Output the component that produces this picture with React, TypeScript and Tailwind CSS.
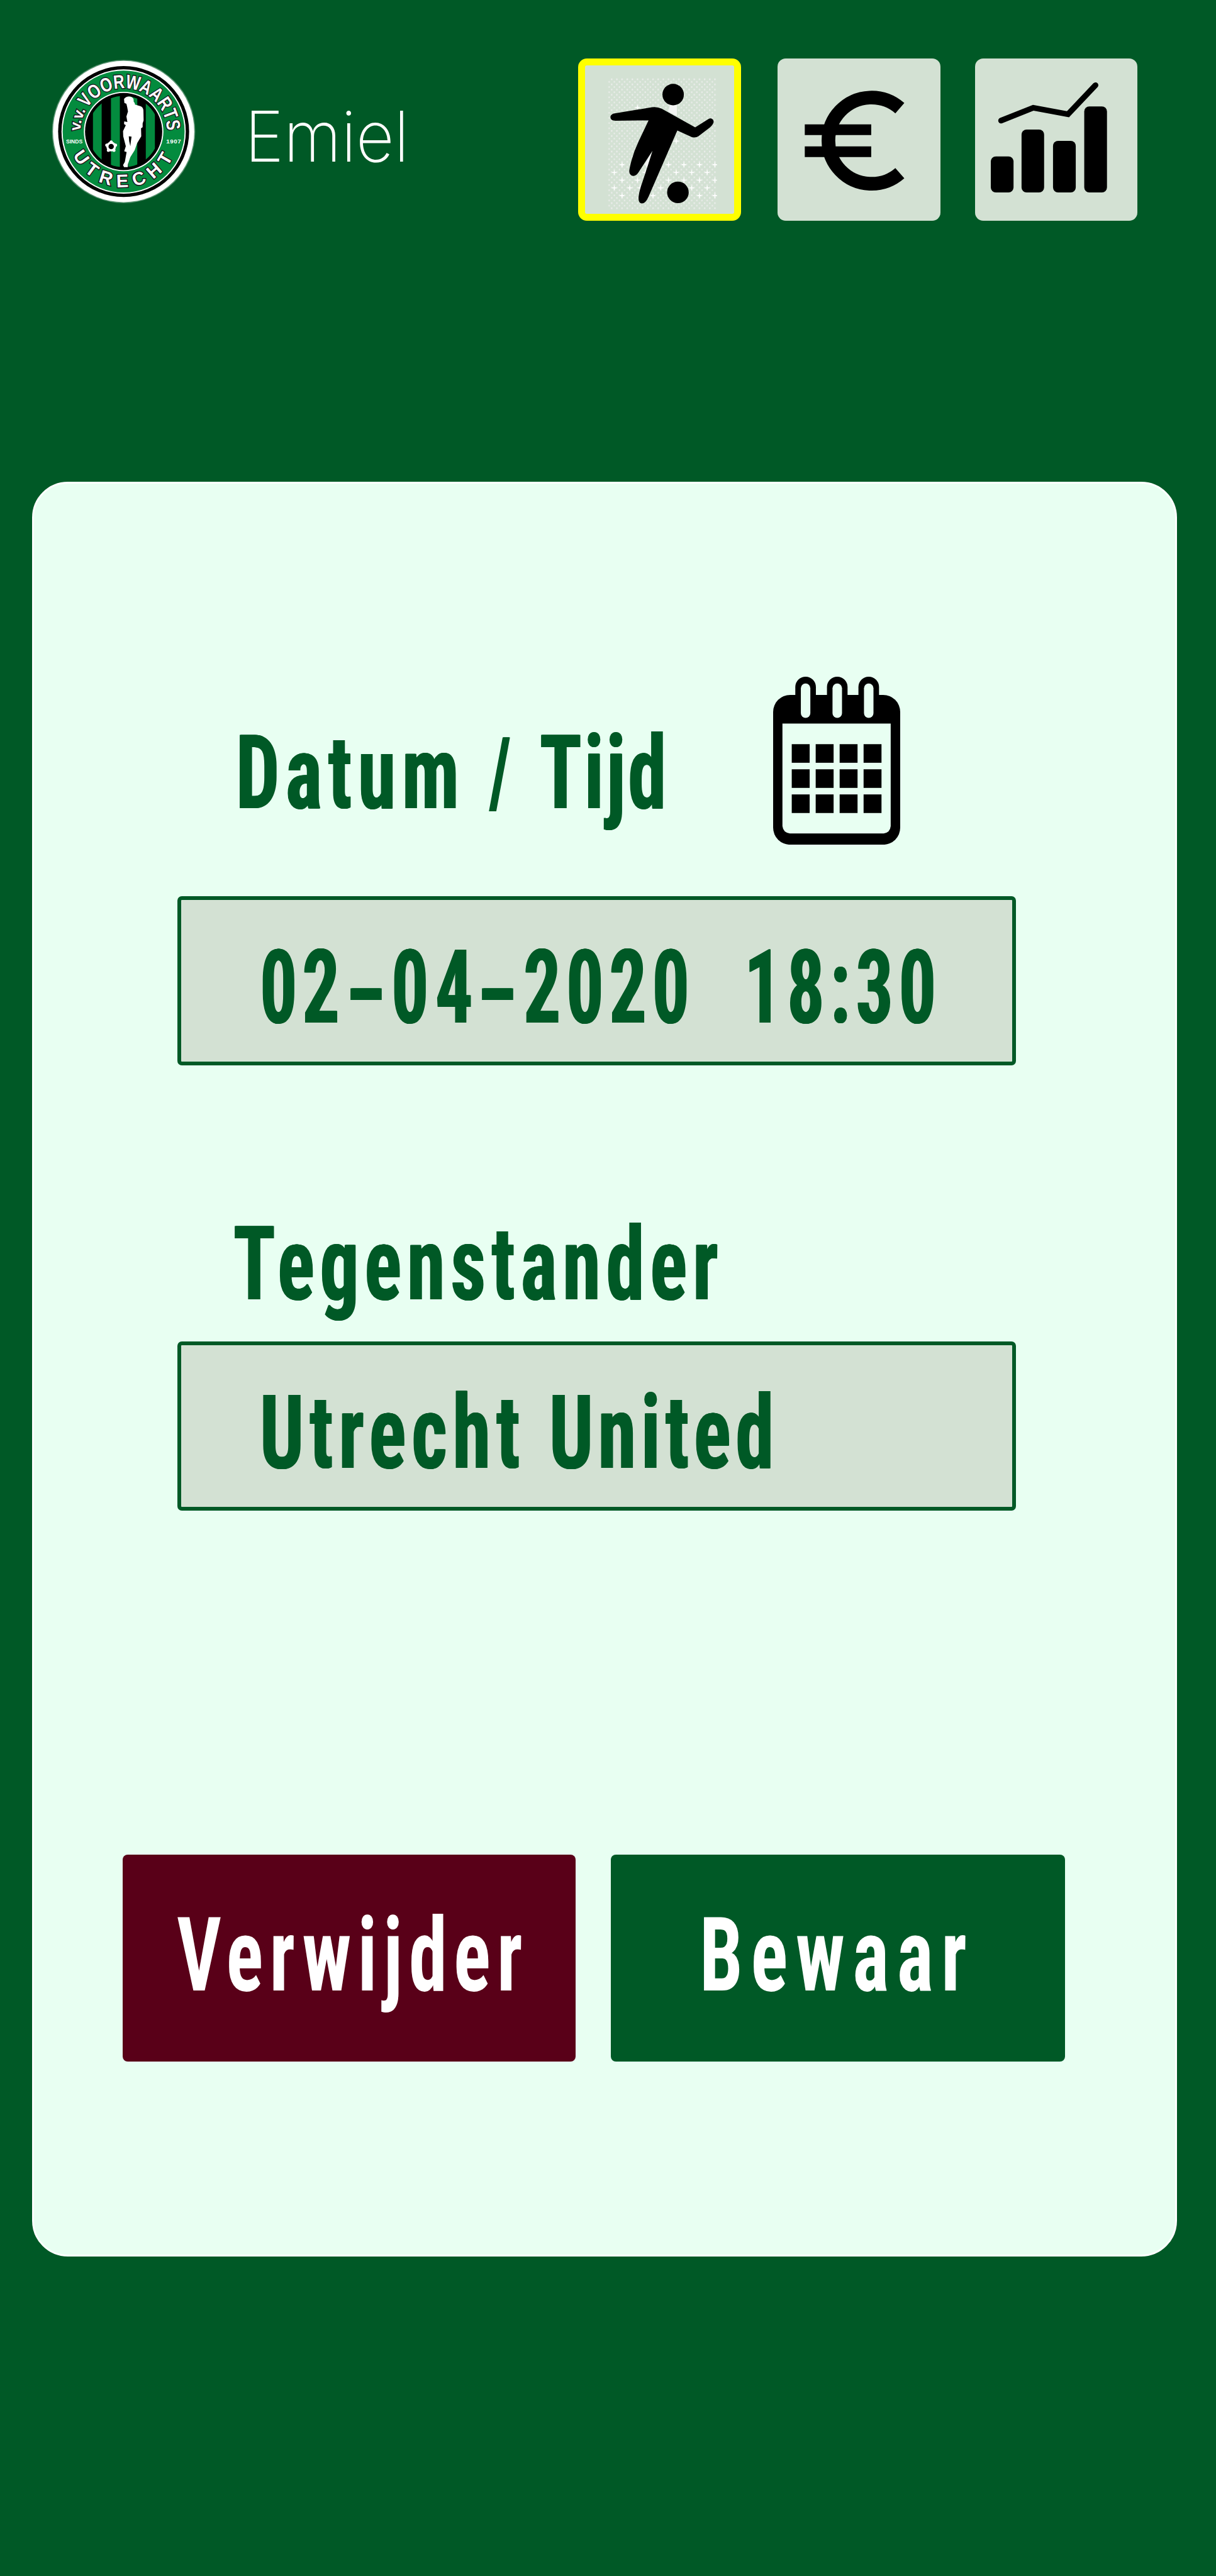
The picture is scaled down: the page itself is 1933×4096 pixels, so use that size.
import React from 'react';

function Word({ children, className }: { children: string; className: string }) {
  return (
    <span className={`block h-[192px] leading-[192px] whitespace-nowrap origin-left ${className}`}>{children}</span>
  );
}

function ClubLogo() {
  return (
    <svg viewBox="80 60 730 740" className="h-[232.8px] w-[229.7px] shrink-0">
      <defs>
        <clipPath id="field"><circle cx="444" cy="426" r="180" /></clipPath>
        <path id="arcTop" d="M 225 426 A 219 219 0 0 1 663 426" />
        <path id="arcBottom" d="M 180 522 A 281 281 0 0 0 708 522" />
      </defs>
      <circle cx="444" cy="426" r="362" fill="#fff" opacity=".35" />
      <circle cx="444" cy="426" r="357" fill="#fff" />
      <circle cx="444" cy="426" r="331" fill="#000" />
      <circle cx="444" cy="426" r="314" fill="#fff" />
      <circle cx="444" cy="426" r="308" fill="#038b3e" />
      <circle cx="444" cy="426" r="201" fill="#fff" />
      <circle cx="444" cy="426" r="195" fill="#000" />
      <g clipPath="url(#field)" fill="#038b3e">
        <rect x="289" y="230" width="44" height="400" />
        <rect x="380" y="230" width="45" height="400" />
        <rect x="468" y="230" width="45" height="400" />
        <rect x="556" y="230" width="46" height="400" />
      </g>
      <path fill="#fff" d="M446 262 Q452 250 470 249 Q488 249 494 262 L495 276 Q502 280 501 290 L528 298 Q543 303 544 320 L545 370 L540 385 L540 404 L532 410 L533 450 L512 485 L500 520 L478 555 L466 590 L465 606 L446 606 L441 596 L450 580 L459 530 L447 526 L455 500 L442 450 L441 424 L455 394 L446 388 L447 375 L463 378 L458 350 L466 325 L462 302 L458 286 L448 282 Z" />
      <path fill="#000" d="M470 450 L484 452 L480 480 L478 500 L472 475 Z" />
      <circle cx="381" cy="502" r="19" fill="#000" stroke="#fff" strokeWidth="11" />
      <g fill="#fff">
        <circle cx="381" cy="479" r="8" /><circle cx="403" cy="495" r="8" /><circle cx="395" cy="521" r="8" /><circle cx="367" cy="521" r="8" /><circle cx="359" cy="495" r="8" />
      </g>
      <g fill="#fff" stroke="#1c0f1a" strokeWidth="9" paintOrder="stroke" fontFamily="Liberation Sans" fontWeight="700">
        <text fontSize="78"><textPath href="#arcTop" startOffset="2" textLength="112">v.v.</textPath></text>
        <text fontSize="98"><textPath href="#arcTop" startOffset="124" textLength="560" lengthAdjust="spacingAndGlyphs">VOORWAARTS</textPath></text>
        <text fontSize="92" letterSpacing="31"><textPath href="#arcBottom" startOffset="25">UTRECHT</textPath></text>
      </g>
      <g fill="#fff" fontFamily="Liberation Sans" fontWeight="700" fontSize="31">
        <text x="153" y="486" textLength="83" lengthAdjust="spacingAndGlyphs">SINDS</text>
        <text x="659" y="486" textLength="75">1907</text>
      </g>
    </svg>
  );
}

const sparkles = [[342, 303], [537, 472], [264, 591], [498, 591], [576, 591], [654, 591], [732, 591], [225, 630], [381, 630], [537, 630], [615, 630], [693, 630], [264, 669], [342, 669], [498, 669], [576, 669], [654, 669], [732, 669], [225, 708], [303, 708], [355, 708], [459, 708], [615, 708], [693, 708], [264, 747], [420, 747], [654, 747], [732, 747]];

function SoccerIcon() {
  return (
    <svg viewBox="78 90 750 750" className="block h-full w-full">
      <defs>
        <pattern id="dots" x="206" y="154" width="26" height="26" patternUnits="userSpaceOnUse">
          <rect x="3" y="2" width="7" height="8" fill="#ecedec" />
          <rect x="16" y="15" width="7" height="8" fill="#e9ece9" />
        </pattern>
      </defs>
      <rect x="192" y="154" width="546" height="662" fill="url(#dots)" />
      <path fill="#f4f5f4" d="M505 290 H541 V345 L498 322 Z M416 518 L380 588 L392 610 Z" />
      <g fill="#fff">
        {sparkles.map(([x, y]) => (
          <path key={`${x}-${y}`} d={`M${x - 2} ${y - 11} h5 v8 h8 v5 h-8 v8 h-5 v-8 h-8 v-5 h8 z`} />
        ))}
      </g>
      <circle cx="522" cy="237" r="54" />
      <circle cx="546" cy="730" r="54.5" />
      <path d="M228 332 L415 301 Q440 297 464 308 L633 402 L700 360 C715 350 732 366 724 382 C721 390 714 397 708 402 L650 447 Q635 457 616 451 L543 418 L398 752 Q386 780 371 785 C353 788 346 776 348 752 Q351 728 358 705 Q400 580 418 520 L347 630 Q335 648 321 647 C305 645 298 632 302 612 Q316 540 348 473 L398 367 L232 369 C212 369 206 360 206 351 C206 342 214 334 228 332 Z" />
    </svg>
  );
}

function EuroIcon() {
  return (
    <svg viewBox="0 0 274 274" className="block h-full w-full">
      <path d="M45.9 111 H157.8 V129 H45.9 Z M45.9 148 H157.8 V166 H45.9 Z" />
      <path d="M206 83.7 A72.6 72.6 0 1 0 206 193.2" fill="none" stroke="#000" strokeWidth="23" />
    </svg>
  );
}

function ChartIcon() {
  return (
    <svg viewBox="0 0 274 274" className="block h-full w-full">
      <rect x="26.5" y="165" width="38.3" height="60.7" rx="8.5" />
      <rect x="78.3" y="119.7" width="38" height="106" rx="8.5" />
      <rect x="131.3" y="138.7" width="38.3" height="87" rx="8.5" />
      <rect x="183.9" y="80.7" width="38.3" height="145" rx="8.5" />
      <path d="M43.8 104.7 L98 83 L156.6 94 L202.9 45" fill="none" stroke="#000" strokeWidth="9.6" strokeLinecap="round" />
    </svg>
  );
}

function CalendarIcon() {
  return (
    <svg viewBox="125 60 642 849" className="h-[267.1px] w-[202px] shrink-0">
      <rect x="125" y="152" width="642" height="757" rx="86" />
      <path fill="#e8fff2" d="M172 297 H719 V815 Q716 848 684 852 H209 Q176 848 172 815 Z" />
      {[237, 397, 556].map((x) => (
        <g key={x}>
          <rect x={x} y="60" width="104" height="150" rx="52" />
          <rect x={x + 28} y="94" width="48" height="174" rx="24" fill="#e8fff2" />
        </g>
      ))}
      {[401, 528, 655].map((y) => [219, 340, 461, 582].map((x) => <rect key={`${x}-${y}`} x={x} y={y} width="90.5" height="94" />))}
    </svg>
  );
}

export default function App() {
  return (
    <div className="flex h-[4096px] w-[1933px] flex-col overflow-hidden bg-[#005926] font-['Roboto',sans-serif]">
      <header className="flex h-[766.4px] shrink-0 items-start">
        <div className="mt-[94.4px] ml-[81.8px]"><ClubLogo /></div>
        <div className="mt-[149px] ml-[77.6px] w-[530.2px]">
          <span className="block h-[136px] origin-left scale-x-[.942] font-['Inter',sans-serif] text-[111.6px] leading-[136px] font-[240] whitespace-nowrap text-white">Emiel</span>
        </div>
        <nav className="mt-[92.5px] flex">
          <button className="h-[258.6px] w-[258.6px] rounded-[14px] border-[11.3px] border-[#ffff00] bg-[#d3e1d3]"><SoccerIcon /></button>
          <button className="ml-[58.6px] h-[258.6px] w-[258.6px] rounded-[13px] bg-[#d3e1d3]"><EuroIcon /></button>
          <button className="ml-[54.6px] h-[258.6px] w-[258.6px] rounded-[13px] bg-[#d3e1d3]"><ChartIcon /></button>
        </nav>
      </header>
      <main className="ml-[50.6px] flex h-[2821.4px] w-[1820.8px] shrink-0 flex-col rounded-[57px] border-[3px] border-white bg-[#e8fff2] text-[163.6px] font-bold text-[#005926] [font-stretch:75%] [text-shadow:1.2px_0_currentColor,-1.2px_0_currentColor]">
        <div className="mt-[306.6px] ml-[321.1px] flex h-[349px]">
          <div className="mt-[56.6px] flex w-[853.9px] shrink-0">
            <div className="w-[403.8px] shrink-0"><Word className="scale-x-[.75] tracking-[12.9px]">Datum</Word></div>
            <div className="w-[79.7px] shrink-0"><Word className="origin-[0_35px] scale-x-[.62] scale-y-[.93]">/</Word></div>
            <Word className="scale-x-[.75] tracking-[5.7px]">Tijd</Word>
          </div>
          <CalendarIcon />
        </div>
        <div className="ml-[228.2px] flex h-[269.2px] w-[1333.1px] rounded-[7px] border-[6.6px] border-[#005926] bg-[#d3e1d3] pt-[42.8px] pl-[124.8px]">
          <div className="w-[134.7px] shrink-0"><Word className="scale-x-[.72] tracking-[10.9px]">02</Word></div>
          <div className="w-[74.8px] shrink-0"><Word className="translate-y-[4.5px] scale-x-[1.2]">-</Word></div>
          <div className="w-[134.4px] shrink-0"><Word className="scale-x-[.72] tracking-[14.6px]">04</Word></div>
          <div className="w-[75.9px] shrink-0"><Word className="translate-y-[4.5px] scale-x-[1.2]">-</Word></div>
          <div className="w-[350.8px] shrink-0"><Word className="scale-x-[.72] tracking-[12px]">2020</Word></div>
          <div className="w-0 shrink-0"><Word className="w-max scale-x-[.72] tracking-[12.1px]">18:30</Word></div>
        </div>
        <div className="mt-[219.7px] ml-[317.8px] h-[219.2px]"><Word className="scale-x-[.75] tracking-[11.9px]">Tegenstander</Word></div>
        <div className="ml-[228.2px] flex h-[269.2px] w-[1333.1px] rounded-[7px] border-[6.6px] border-[#005926] bg-[#d3e1d3] pt-[42.5px] pl-[125.7px]">
          <div className="w-[459.6px] shrink-0"><Word className="scale-x-[.75] tracking-[11.8px]">Utrecht</Word></div>
          <Word className="scale-x-[.75] tracking-[10.3px]">United</Word>
        </div>
        <div className="mt-[547.2px] ml-[141.3px] flex gap-[56px] text-white">
          <button className="flex h-[328.5px] w-[720.4px] items-start rounded-[8px] bg-[#590018] pt-[63.4px] pl-[86.5px]"><Word className="scale-x-[.75] tracking-[13.7px]">Verwijder</Word></button>
          <button className="flex h-[328.5px] w-[721.5px] items-start rounded-[8px] bg-[#005926] pt-[63.4px] pl-[140.5px]"><Word className="scale-x-[.75] tracking-[16.9px]">Bewaar</Word></button>
        </div>
      </main>
    </div>
  );
}
